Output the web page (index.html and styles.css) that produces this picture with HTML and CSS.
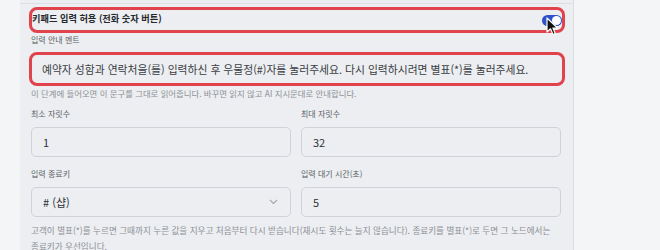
FILE: index.html
```html
<!DOCTYPE html>
<html lang="ko">
<head>
    <meta charset="UTF-8">
    <meta name="viewport" content="width=device-width, initial-scale=1.0">
    <title>키패드 입력 설정</title>
    <link rel="stylesheet" href="styles.css">
</head>
<body>
    <div class="panel">
        <div class="divider"></div>

        <div class="toggle-row mark">
            <span class="toggle-label">키패드 입력 허용 (전화 숫자 버튼)</span>
            <span class="switch on"><span class="knob"></span></span>
            <svg class="cursor" width="13" height="19" viewBox="0 0 13 19">
                <path d="M1 1 L1 15 L4.5 11.8 L7 17.5 L9.3 16.5 L6.9 11 L11.5 11 Z" fill="#111" stroke="#fff" stroke-width="1.2" stroke-linejoin="round"/>
            </svg>
        </div>

        <div class="field-label">입력 안내 멘트</div>
        <div class="message mark">예약자 성함과 연락처을(를) 입력하신 후 우물정(#)자를 눌러주세요. 다시 입력하시려면 별표(*)를 눌러주세요.</div>
        <p class="hint">이 단계에 들어오면 이 문구를 그대로 읽어줍니다. 바꾸면 읽지 않고 AI 지시문대로 안내합니다.</p>

        <div class="grid">
            <div class="field">
                <label class="field-label" for="minDigits">최소 자릿수</label>
                <input class="input" id="minDigits" type="text" value="1">
            </div>
            <div class="field">
                <label class="field-label" for="maxDigits">최대 자릿수</label>
                <input class="input" id="maxDigits" type="text" value="32">
            </div>
            <div class="field">
                <label class="field-label" for="endKey">입력 종료키</label>
                <div class="select">
                    <span>#&nbsp;(샵)</span>
                    <svg width="9" height="6" viewBox="0 0 9 6"><path d="M1 1 L4.5 4.5 L8 1" fill="none" stroke="#a3a8b0" stroke-width="1.1"/></svg>
                </div>
            </div>
            <div class="field">
                <label class="field-label" for="waitTime">입력 대기 시간(초)</label>
                <input class="input" id="waitTime" type="text" value="5">
            </div>
        </div>

        <p class="hint long">고객이 별표(*)를 누르면 그때까지 누른 값을 지우고 처음부터 다시 받습니다(재시도 횟수는 늘지 않습니다). 종료키를 별표(*)로 두면 그 노드에서는 종료키가 우선입니다.</p>
    </div>
</body>
</html>
```

FILE: styles.css
```css
body {
    margin: 0;
    background-color: #f4f5f7;
    font-family: "Noto Sans CJK KR", "Noto Sans", sans-serif;
    color: #2f3237;
}
.panel {
    margin-left: 20px;
    width: 530px;
    min-height: 250px;
    padding: 3px 12px 0 11px;
    background-color: #eceef1;
    border-right: 1px solid #dadde2;
}
.divider {
    height: 1px;
    margin: 0 -12px 0 -11px;
    background-color: #dcdfe4;
}
.mark {
    border: 3px solid #e0434c;
    border-radius: 8px;
    margin-left: -2px;
    margin-right: -4px;
}
.toggle-row {
    position: relative;
    display: flex;
    align-items: center;
    justify-content: space-between;
    height: 20px;
    margin-top: 3px;
}
.toggle-label {
    font-size: 9.2px;
    font-weight: 700;
    color: #25282c;
    margin-top: -4px;
}
.switch {
    display: inline-block;
    position: relative;
    width: 20px;
    height: 11px;
    border-radius: 6px;
    background-color: #2f52c9;
}
.switch .knob {
    position: absolute;
    top: 1px;
    right: 1px;
    width: 9px;
    height: 9px;
    border-radius: 50%;
    background-color: #fff;
}
.cursor {
    position: absolute;
    right: 3px;
    top: 7px;
}
.field-label {
    display: block;
    font-size: 8px;
    line-height: 12px;
    color: #5a5f66;
}
.toggle-row + .field-label {
    margin-top: 1px;
    margin-bottom: 6px;
}
.message {
    height: 28px;
    line-height: 28px;
    padding-left: 10px;
    font-size: 10.8px;
    color: #3a3d42;
    white-space: nowrap;
}
.hint {
    margin: 1px 0 0;
    font-size: 8.4px;
    line-height: 12px;
    color: #8c9097;
    word-break: keep-all;
}
.grid {
    display: grid;
    grid-template-columns: 1fr 1fr;
    column-gap: 10px;
    row-gap: 11px;
    margin-top: 9px;
}
.field .field-label {
    margin-bottom: 7px;
}
.input, .select {
    box-sizing: border-box;
    width: 100%;
    height: 30px;
    padding: 0 11px;
    border: 1px solid #cfd3d9;
    border-radius: 5px;
    background-color: #eceef1;
    font-family: inherit;
    font-size: 11px;
    color: #2f3237;
    outline: none;
}
.select {
    display: flex;
    align-items: center;
    justify-content: space-between;
    padding-right: 12px;
}
.hint.long {
    margin-top: 5px;
    font-size: 8.6px;
    line-height: 16px;
}
```
